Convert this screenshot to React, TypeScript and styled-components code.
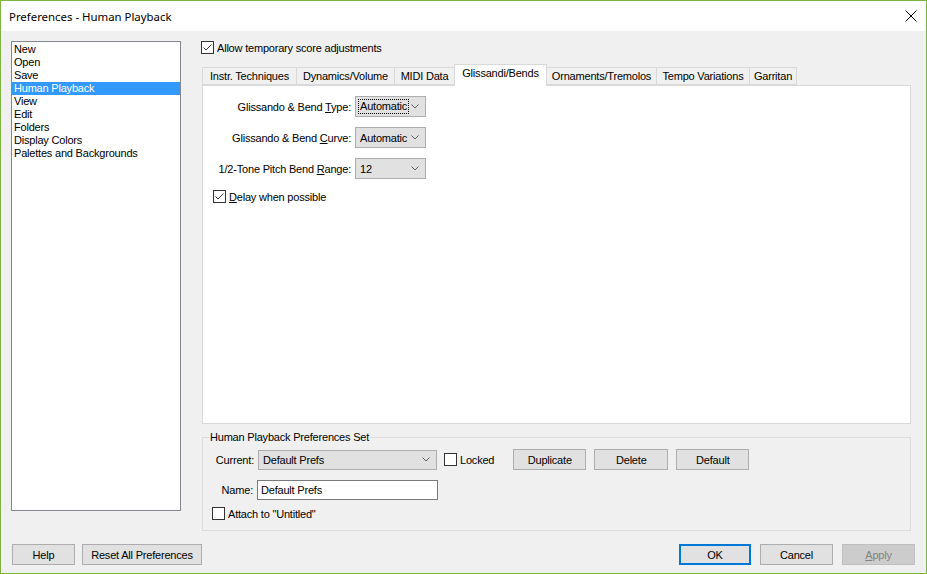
import styled, { createGlobalStyle } from 'styled-components';

const GlobalStyle = createGlobalStyle`
  html, body {
    margin: 0;
    padding: 0;
  }
  body {
    font-family: "Liberation Sans", Arial, sans-serif;
    font-size: 11px;
    letter-spacing: -0.2px;
    color: #000;
  }
  * {
    box-sizing: border-box;
  }
`;

const Window = styled.div`
  width: 927px;
  height: 574px;
  border: 1px solid #7db33f;
  background: #f0f0f0;
  display: flex;
  flex-direction: column;
`;

const TitleBar = styled.div`
  height: 30px;
  flex-shrink: 0;
  background: #fff;
  display: flex;
  align-items: center;
  justify-content: space-between;
  padding: 0 9px 0 8px;
  font-family: "Noto Sans", "Open Sans", sans-serif;
  font-size: 11.4px;
  letter-spacing: 0;
`;

const Body = styled.div`
  flex: 1;
  display: flex;
  flex-direction: column;
  padding: 10px 11px 8px 10px;
`;

const Main = styled.div`
  display: flex;
  height: 490px;
`;

const ListBox = styled.ul`
  margin: 0;
  padding: 1px 0;
  list-style: none;
  width: 170px;
  height: 470px;
  background: #fff;
  border: 1px solid #828790;
`;

const ListItem = styled.li<{ $selected?: boolean }>`
  height: 13px;
  line-height: 13px;
  padding-left: 2px;
  white-space: nowrap;
  background: ${({ $selected }) => ($selected ? '#3399ff' : 'transparent')};
  color: ${({ $selected }) => ($selected ? '#fff' : '#000')};
`;

const RightColumn = styled.div`
  width: 710px;
  margin-left: 20px;
  display: flex;
  flex-direction: column;
`;

const CheckRow = styled.label<{ $indent?: number }>`
  display: flex;
  align-items: center;
  height: 13px;
  gap: 3px;
  margin-left: ${({ $indent }) => $indent ?? 0}px;
  white-space: nowrap;
`;

const Box = styled.span`
  width: 13px;
  height: 13px;
  flex-shrink: 0;
  background: #fff;
  border: 1px solid #333;
  display: flex;
  align-items: center;
  justify-content: center;
`;

const TabStrip = styled.div`
  display: flex;
  align-items: flex-end;
  height: 21px;
  margin-top: 10px;
  padding-left: 1px;
`;

const Tab = styled.div<{ $active?: boolean; $width: number }>`
  width: ${({ $width }) => $width}px;
  height: ${({ $active }) => ($active ? 22 : 18)}px;
  margin-bottom: ${({ $active }) => ($active ? -1 : 0)}px;
  margin-left: -1px;
  padding-top: 2px;
  text-align: center;
  border: 1px solid #d9d9d9;
  border-bottom: ${({ $active }) => ($active ? 'none' : '1px solid #d9d9d9')};
  background: ${({ $active }) => ($active ? '#fff' : '#f0f0f0')};
  position: relative;
  z-index: ${({ $active }) => ($active ? 1 : 0)};
  white-space: nowrap;
  &:first-child {
    margin-left: 0;
  }
`;

const Panel = styled.div`
  margin-left: 1px;
  width: 709px;
  height: 339px;
  background: #fff;
  border: 1px solid #d9d9d9;
  padding-top: 10px;
`;

const FieldGrid = styled.div`
  display: grid;
  grid-template-columns: 148px auto;
  column-gap: 4px;
  row-gap: 10px;
  align-items: center;
  justify-content: start;
`;

const FieldLabel = styled.span<{ $width?: number }>`
  text-align: right;
  white-space: nowrap;
  ${({ $width }) => ($width ? `width: ${$width}px; flex-shrink: 0;` : '')}
`;

const Combo = styled.div<{ $width: number; $height?: number }>`
  width: ${({ $width }) => $width}px;
  height: ${({ $height }) => $height ?? 21}px;
  background: #e1e1e1;
  border: 1px solid #adadad;
  display: flex;
  align-items: center;
  justify-content: space-between;
  padding: 0 6px 0 3px;
  white-space: nowrap;
`;

const FocusText = styled.span`
  outline: 1px dotted #000;
  padding: 0 1px;
  line-height: 13px;
`;

const PlainText = styled.span`
  padding: 0 1px;
`;

const PanelCheck = styled.div`
  margin-top: 11px;
`;

const GroupBox = styled.fieldset`
  margin: 7px 0 0 1px;
  width: 709px;
  height: 100px;
  padding: 0;
  border: 1px solid #dcdcdc;
  display: flex;
  flex-direction: column;
`;

const Legend = styled.legend`
  margin-left: 6px;
  padding: 0 1px;
  line-height: 13px;
`;

const GroupRow = styled.div<{ $top: number }>`
  display: flex;
  align-items: center;
  margin-top: ${({ $top }) => $top}px;
  gap: 4px;
`;

const TextInput = styled.div`
  width: 181px;
  height: 20px;
  background: #fff;
  border: 1px solid #7a7a7a;
  display: flex;
  align-items: center;
  padding-left: 3px;
`;

const Button = styled.button<{ $width: number; $primary?: boolean }>`
  width: ${({ $width }) => $width}px;
  height: 21px;
  padding: 0;
  font-family: "Liberation Sans", Arial, sans-serif;
  font-size: 11px;
  letter-spacing: -0.2px;
  color: ${({ disabled }) => (disabled ? '#838383' : '#000')};
  background: ${({ disabled }) => (disabled ? '#cccccc' : '#e1e1e1')};
  border: ${({ $primary, disabled }) =>
    $primary ? '2px solid #0078d7' : disabled ? '1px solid #bfbfbf' : '1px solid #adadad'};
  flex-shrink: 0;
`;

const ButtonGroup = styled.div<{ $gap: number; $left?: number }>`
  display: flex;
  gap: ${({ $gap }) => $gap}px;
  margin-left: ${({ $left }) => $left ?? 0}px;
`;

const Footer = styled.div`
  display: flex;
  justify-content: space-between;
  margin-top: 13px;
  padding-left: 1px;
`;

const Check = ({ checked }: { checked?: boolean }) => (
  <Box>
    {checked && (
      <svg width="11" height="11" viewBox="0 0 11 11">
        <path d="M1.5 5.5 L4 8 L9.5 2.5" fill="none" stroke="#333" strokeWidth="1" />
      </svg>
    )}
  </Box>
);

const Chevron = () => (
  <svg width="8" height="5" viewBox="0 0 8 5">
    <path d="M0.5 0.5 L4 4 L7.5 0.5" fill="none" stroke="#606060" strokeWidth="1" />
  </svg>
);

const CloseIcon = () => (
  <svg width="12" height="12" viewBox="0 0 12 12">
    <path d="M0.5 0.5 L11.5 11.5 M11.5 0.5 L0.5 11.5" stroke="#000" strokeWidth="1" />
  </svg>
);

const items = [
  'New',
  'Open',
  'Save',
  'Human Playback',
  'View',
  'Edit',
  'Folders',
  'Display Colors',
  'Palettes and Backgrounds',
];

const tabs = [
  { label: 'Instr. Techniques', width: 95 },
  { label: 'Dynamics/Volume', width: 99 },
  { label: 'MIDI Data', width: 61 },
  { label: 'Glissandi/Bends', width: 93 },
  { label: 'Ornaments/Tremolos', width: 111 },
  { label: 'Tempo Variations', width: 94 },
  { label: 'Garritan', width: 48 },
];

function App() {
  return (
    <>
      <GlobalStyle />
      <Window>
        <TitleBar>
          <span>Preferences - Human Playback</span>
          <CloseIcon />
        </TitleBar>
        <Body>
          <Main>
            <ListBox>
              {items.map((item) => (
                <ListItem key={item} $selected={item === 'Human Playback'}>
                  {item}
                </ListItem>
              ))}
            </ListBox>
            <RightColumn>
              <CheckRow>
                <Check checked />
                Allow temporary score adjustments
              </CheckRow>
              <TabStrip>
                {tabs.map((t) => (
                  <Tab key={t.label} $width={t.width} $active={t.label === 'Glissandi/Bends'}>
                    {t.label}
                  </Tab>
                ))}
              </TabStrip>
              <Panel>
                <FieldGrid>
                  <FieldLabel>
                    Glissando &amp; Bend <u>T</u>ype:
                  </FieldLabel>
                  <Combo $width={71}>
                    <FocusText>Automatic</FocusText>
                    <Chevron />
                  </Combo>
                  <FieldLabel>
                    Glissando &amp; Bend <u>C</u>urve:
                  </FieldLabel>
                  <Combo $width={71}>
                    <PlainText>Automatic</PlainText>
                    <Chevron />
                  </Combo>
                  <FieldLabel>
                    1/2-Tone Pitch Bend <u>R</u>ange:
                  </FieldLabel>
                  <Combo $width={71}>
                    <PlainText>12</PlainText>
                    <Chevron />
                  </Combo>
                </FieldGrid>
                <PanelCheck>
                  <CheckRow $indent={10}>
                    <Check checked />
                    <span>
                      <u>D</u>elay when possible
                    </span>
                  </CheckRow>
                </PanelCheck>
              </Panel>
              <GroupBox>
                <Legend>Human Playback Preferences Set</Legend>
                <GroupRow $top={5}>
                  <FieldLabel $width={51}>Current:</FieldLabel>
                  <Combo $width={179} $height={20}>
                    <PlainText>Default Prefs</PlainText>
                    <Chevron />
                  </Combo>
                  <CheckRow $indent={3}>
                    <Check />
                    Locked
                  </CheckRow>
                  <ButtonGroup $gap={8} $left={15}>
                    <Button $width={73}>Duplicate</Button>
                    <Button $width={74}>Delete</Button>
                    <Button $width={73}>Default</Button>
                  </ButtonGroup>
                </GroupRow>
                <GroupRow $top={10}>
                  <FieldLabel $width={50}>Name:</FieldLabel>
                  <TextInput>Default Prefs</TextInput>
                </GroupRow>
                <GroupRow $top={7}>
                  <CheckRow $indent={9}>
                    <Check />
                    Attach to "Untitled"
                  </CheckRow>
                </GroupRow>
              </GroupBox>
            </RightColumn>
          </Main>
          <Footer>
            <ButtonGroup $gap={7}>
              <Button $width={63}>Help</Button>
              <Button $width={120}>Reset All Preferences</Button>
            </ButtonGroup>
            <ButtonGroup $gap={9}>
              <Button $width={72} $primary>
                OK
              </Button>
              <Button $width={73}>Cancel</Button>
              <Button $width={73} disabled>
                <u>A</u>pply
              </Button>
            </ButtonGroup>
          </Footer>
        </Body>
      </Window>
    </>
  );
}

export default App;
